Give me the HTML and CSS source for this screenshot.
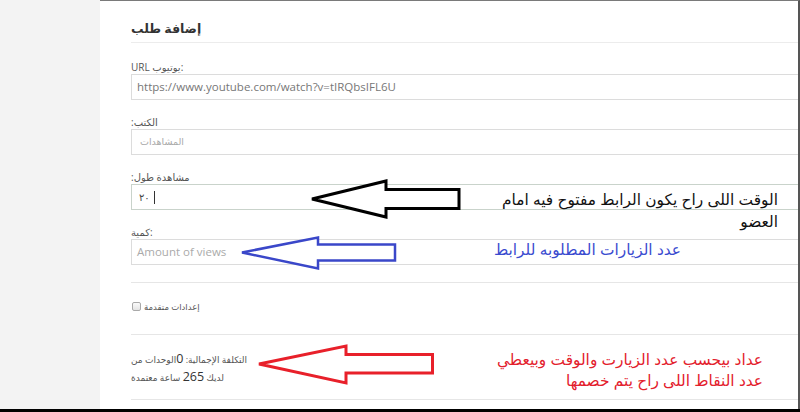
FILE: index.html
```html
<!DOCTYPE html>
<html lang="ar" dir="ltr">
<head>
<meta charset="utf-8">
<title>إضافة طلب</title>
<link rel="stylesheet" href="styles.css">
</head>
<body>
<div class="screen">
  <aside class="side"></aside>
  <main class="card">
    <div class="head"><h1 class="title"><span class="w">إضافة طلب</span></h1></div>
    <div class="field first">
      <div class="lbl">URL يوتيوب:</div>
      <div class="input val">https://www.youtube.com/watch?v=tIRQbsIFL6U</div>
    </div>
    <div class="field">
      <div class="lbl"><span class="w">الكتب:</span></div>
      <div class="input ph-ar"><span class="w">المشاهدات</span></div>
    </div>
    <div class="field">
      <div class="lbl"><span class="w">مشاهدة طول:</span></div>
      <div class="input focus"><span class="digits">٢٠</span><span class="caret"></span></div>
    </div>
    <div class="field">
      <div class="lbl">كمية:</div>
      <div class="input ph">Amount of views</div>
    </div>
    <div class="adv"><span class="check"></span><span class="advlbl w">إعدادات متقدمة</span></div>
    <div class="cost">
      <div class="cline"><span class="w">التكلفة الإجمالية: <span class="num">0</span>الوحدات من</span></div>
      <div class="cline"><span class="w">لديك <span class="num">265</span> ساعة معتمدة</span></div>
    </div>
  </main>
</div>
<div class="footer"></div>

<svg class="arrows" width="800" height="412" viewBox="0 0 800 412">
  <polygon class="arrow black" points="312,199 386,181 386,189.5 459,189.5 459,208.5 386,208.5 386,217"/>
  <polygon class="arrow blue" points="242,252.5 318,237.5 318,244.5 395,244.5 395,260.5 318,260.5 318,268.5"/>
  <polygon class="arrow red" points="259,364 346,346 346,354.5 432.5,354.5 432.5,373 346,373 346,383"/>
</svg>

<div class="note note-black"><div class="nl">الوقت اللى راح يكون الرابط مفتوح فيه امام</div><div class="nl">العضو</div></div>
<div class="note note-blue"><div class="nl">عدد الزيارات المطلوبه للرابط</div></div>
<div class="note note-red"><div class="nl">عداد بيحسب عدد الزيارت والوقت وبيعطي</div><div class="nl">عدد النقاط اللى راح يتم خصمها</div></div>
</body>
</html>
```

FILE: styles.css
```css
html, body {
  margin: 0;
  padding: 0;
  direction: ltr;
}
body {
  width: 800px;
  height: 412px;
  overflow: hidden;
  position: relative;
  background: #000;
  font-family: "Open Sans", "DejaVu Sans", sans-serif;
}
.screen {
  display: flex;
  height: 409px;
  background: #f3f3f3;
}
.side {
  width: 100px;
  flex: none;
}
.card {
  flex: 1;
  min-width: 0;
  background: #fff;
  border-top: 1px solid #7a7a7a;
  border-right: 2px solid #555;
  padding-left: 31px;
  overflow: hidden;
}
.w {
  display: inline-block;
  direction: rtl;
  unicode-bidi: isolate;
  white-space: nowrap;
}
.head {
  height: 42px;
  box-sizing: border-box;
  padding-top: 18px;
  border-bottom: 1px solid #ececec;
}
.title {
  margin: 0;
  font-size: 12.5px;
  line-height: 20px;
  font-weight: 700;
  color: #333;
  display: flex;
}
.field {
  margin-top: 15px;
}
.field.first {
  margin-top: 17px;
}
.lbl {
  height: 14px;
  line-height: 14px;
  font-size: 10px;
  color: #555;
  white-space: nowrap;
}
.input {
  width: calc(100% + 4px);
  height: 26px;
  box-sizing: border-box;
  border: 1px solid #dcdcdc;
  padding-left: 5px;
  line-height: 24px;
  font-size: 11.5px;
  color: #777;
  white-space: nowrap;
  display: flex;
  align-items: center;
}
.input.ph-ar {
  padding-left: 8px;
  font-size: 9.5px;
  color: #aaa;
}
.input.ph {
  color: #aaa;
}
.input.focus {
  border-color: #c9d3cb;
  padding-left: 7px;
}
.digits {
  font-size: 10px;
  color: #444;
}
.caret {
  width: 1px;
  height: 13px;
  background: #333;
  margin-left: 4px;
}
.adv {
  margin-top: 17px;
  border-top: 1px solid #e6e6e6;
  padding: 19px 0 23px 1px;
  display: flex;
  align-items: center;
  gap: 3px;
  height: 9px;
}
.check {
  width: 9px;
  height: 9px;
  box-sizing: border-box;
  border: 1px solid #a9a9a9;
  border-radius: 2px;
  background: linear-gradient(#fafafa, #e4e4e4);
}
.advlbl {
  font-size: 8.5px;
  color: #555;
  line-height: 9px;
}
.cost {
  border-top: 1px solid #e6e6e6;
  border-bottom: 1px solid #e6e6e6;
  padding: 15px 0 13px;
  font-size: 9px;
  color: #555;
}
.cline {
  height: 18px;
  line-height: 18px;
  display: flex;
  align-items: center;
}
.num {
  font-size: 12.5px;
  color: #333;
}
.footer {
  height: 3px;
  background: #000;
}
.arrows {
  position: absolute;
  left: 0;
  top: 0;
  pointer-events: none;
}
.arrow {
  fill: #fff;
  stroke-width: 3;
  stroke-linejoin: miter;
}
.arrow.black { stroke: #000; }
.arrow.blue { stroke: #3a47c9; stroke-width: 2.5; }
.arrow.red { stroke: #e8202a; }
.note {
  position: absolute;
  margin: 0;
  font-family: "Liberation Sans", "DejaVu Sans", sans-serif;
  font-size: 15.4px;
  white-space: nowrap;
  direction: rtl;
  text-align: right;
}
.note-black {
  right: 22px;
  top: 189px;
  line-height: 22px;
  color: #111;
}
.note-blue {
  right: 119px;
  top: 239px;
  line-height: 22px;
  color: #3a4bcf;
}
.note-red {
  right: 37px;
  top: 349px;
  line-height: 21px;
  color: #e3202c;
}
```
